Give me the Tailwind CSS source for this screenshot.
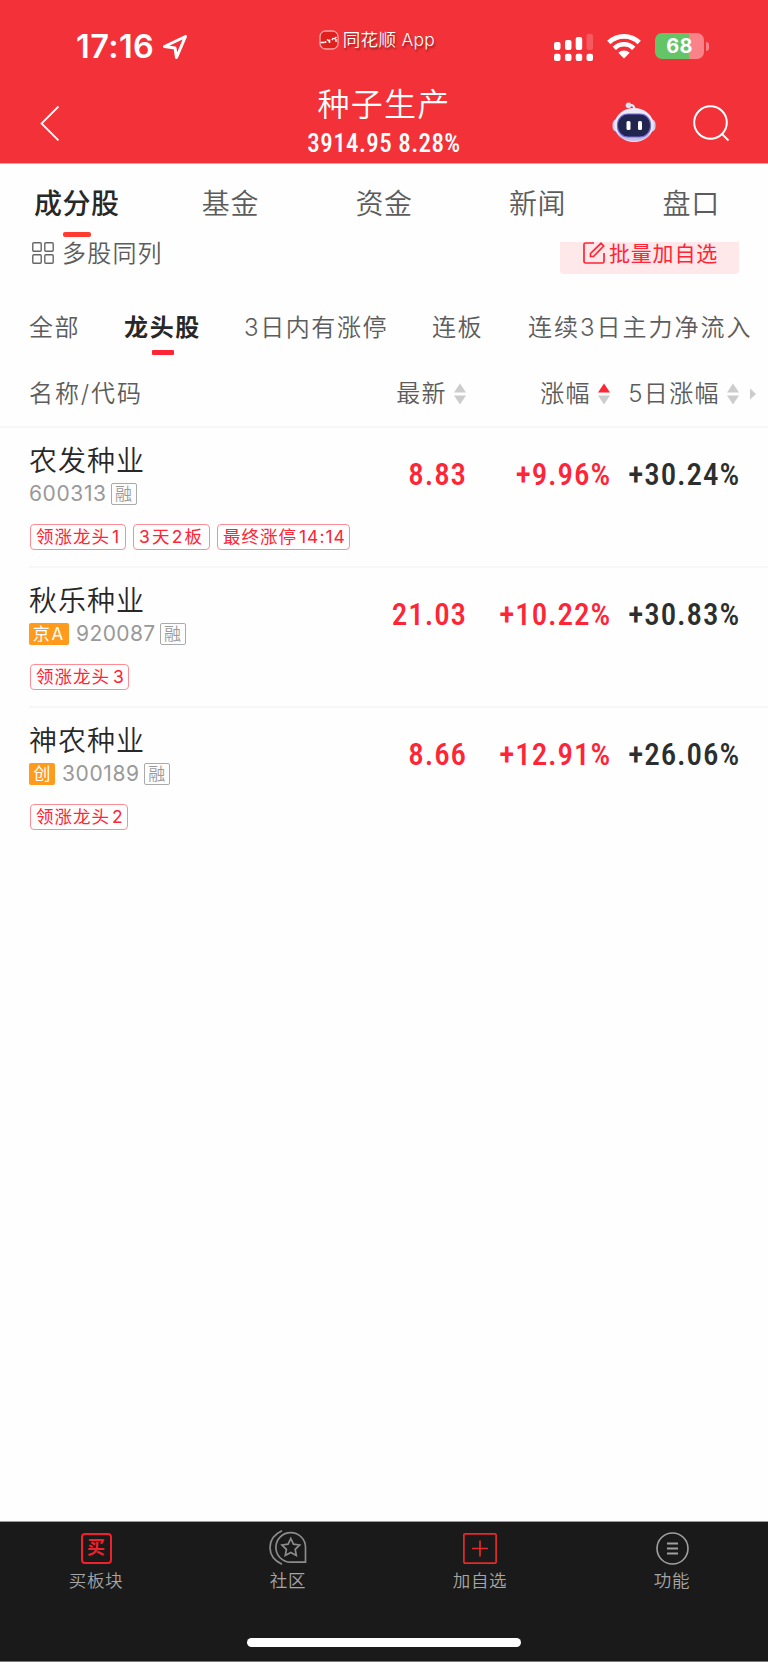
<!DOCTYPE html>
<html lang="zh-CN">
<head>
    <meta charset="UTF-8">
    <meta name="viewport" content="width=device-width, initial-scale=1.0">
    <title>种子生产</title>
    <script src="https://cdn.jsdelivr.net/npm/@tailwindcss/browser@4"></script>
</head>
<body class="bg-[#fefefe] font-['Inter','Noto_Sans_CJK_SC',sans-serif] text-[#323232]">
<div class="w-[768px] h-[1662px] flex flex-col overflow-hidden">

    <!-- Header -->
    <header class="h-[163px] shrink-0 bg-[#f23138] text-white box-content border-b border-[#f8a0a3]">
        <!-- Status bar -->
        <div class="grid grid-cols-3 h-[92px]">
            <div class="flex items-center pl-[76px] gap-2">
                <span class="text-[32.5px] font-semibold leading-[94px] tracking-[0.4px]">17:16</span>
                <svg width="26" height="26" viewBox="0 0 26 26" fill="none" stroke="white" stroke-width="3" stroke-linejoin="round"><path d="M23.500 2.500 L2.500 12.500 L13 14 L14.500 23.500 Z"/></svg>
            </div>
            <div class="flex items-center justify-center gap-1 pr-[14px] pb-[14px]">
                <svg width="20" height="20" viewBox="0 0 20 20" fill="none"><rect x="1" y="1" width="18" height="18" rx="5.500" fill="#e0201f" stroke="#f8a5a6" stroke-width="1.300"/><path d="M1.500 12.500h4M6.500 13v-2M8 9.500l2 1.500M10.500 13v-3.500M13 10l1.500-2M15 9l2.500-2M17 9v3" stroke="white" stroke-width="1.500"/></svg>
                <span class="text-[17.5px] leading-5 tracking-[0.3px] font-[350] text-shadow-[1px_2px_2px_rgb(0_0_0_/_0.4)]">同花顺 App</span>
            </div>
            <div class="flex items-center pl-[42px] gap-[14px]">
                <svg width="39" height="27" viewBox="0 0 39 27" fill="white"><rect x="0" y="8" width="6.500" height="8" rx="2"/><rect x="11" y="6" width="6.500" height="10" rx="2"/><rect x="21.700" y="3" width="6.500" height="13" rx="2"/><rect x="32.500" y="0" width="6.500" height="16" rx="2" opacity=".2"/><rect x="0" y="19.700" width="6.500" height="7.200" rx="2"/><rect x="11" y="19.700" width="6.500" height="7.200" rx="2"/><rect x="21.700" y="19.700" width="6.500" height="7.200" rx="2"/><rect x="32.500" y="19.700" width="6.500" height="7.200" rx="2"/></svg>
                <svg class="-mt-[2px]" width="34" height="26" viewBox="0 0 34 26" fill="none" stroke="white" stroke-width="4.700"><path d="M1.800 9.500 A21.800 21.800 0 0 1 32.200 9.500"/><path d="M7.300 15.300 A13.700 13.700 0 0 1 26.700 15.300"/><path d="M17 25.500 L11.300 19.800 A8 8 0 0 1 22.700 19.800 Z" fill="white" stroke="none"/></svg>
                <div class="flex items-center gap-[2px] -mt-[2px]">
                    <div class="w-[49px] h-[26px] rounded-[7px] bg-linear-to-r from-[#65c466] from-70% to-[#f98388] to-70% text-center text-[20px] leading-[26px] font-bold tracking-[0.3px]">68</div>
                    <div class="w-[3px] h-[9px] rounded-r-full bg-[#f98388]"></div>
                </div>
            </div>
        </div>
        <!-- Title bar -->
        <div class="grid grid-cols-3 h-[71px]">
            <div class="pl-[39px] pt-[13px]">
                <svg width="21" height="36" viewBox="0 0 21 36" fill="none" stroke="white" stroke-width="1.800"><path d="M19.500 1.500 L2.500 18.500 L19.500 35.500"/></svg>
            </div>
            <div class="text-center">
                <h1 class="text-[32px] leading-[34px] font-[350] tracking-[1.2px] -mt-[4px]">种子生产</h1>
                <div class="font-['Roboto'] font-stretch-[85%] font-medium text-[25px] leading-[40px] tracking-[0.4px] pt-0.5">3914.95 8.28%</div>
            </div>
            <div class="flex pl-[100px] pt-[10px]">
                <svg width="44" height="41" viewBox="0 0 44 41" fill="none">
                    <path d="M17 3.500 C21 2.500 22.500 4 22.500 8" stroke="#e6e3f5" stroke-width="2.200"/>
                    <circle cx="16.500" cy="3.300" r="2.800" fill="#dfe0f4"/>
                    <rect x="0.500" y="17" width="43" height="13" rx="5" fill="#cfcdf0"/>
                    <ellipse cx="22" cy="23" rx="19.500" ry="17" fill="#ece9f8"/>
                    <path d="M4 30 C10 42 34 42 40 30 C34 37 10 37 4 30Z" fill="#c5bfea"/>
                    <rect x="5.500" y="12" width="33" height="23" rx="10.500" fill="#20264d" stroke="#7468d8" stroke-width="1.200"/>
                    <rect x="14.500" y="19" width="4" height="9" rx="1.500" fill="white"/>
                    <rect x="26" y="19" width="4" height="9" rx="1.500" fill="white"/>
                </svg>
                <svg class="ml-[37px] mt-[3px]" width="37" height="37" viewBox="0 0 37 37" fill="none" stroke="white" stroke-width="2"><circle cx="17.500" cy="17.500" r="16.300"/><path d="M28.500 28.500 L35.500 35.500"/></svg>
            </div>
        </div>
    </header>

    <!-- Main tabs -->
    <nav class="grid grid-cols-5 h-[78px] shrink-0 text-center text-[28px] leading-[80px] tracking-[0.6px] font-[350] text-[#5c5c5c]">
        <div class="flex flex-col items-center text-[#282828]">
            <span class="font-medium h-[68px]">成分股</span>
            <span class="w-7 h-[5px] rounded-[2px] bg-[#ff3a30]"></span>
        </div>
        <div>基金</div>
        <div>资金</div>
        <div>新闻</div>
        <div>盘口</div>
    </nav>

    <!-- Toolbar -->
    <div class="flex justify-between h-[33px] shrink-0 pl-8 pr-[29px]">
        <div class="flex items-start gap-[8px] text-[24px] leading-6 tracking-[1.2px] font-[350] text-[#5c5c5c]">
            <svg width="22" height="22" viewBox="0 0 22 22" fill="none" stroke="#666" stroke-width="1.400"><rect x=".8" y=".8" width="8.400" height="8.400" rx="1"/><rect x="12.800" y=".8" width="8.400" height="8.400" rx="1"/><rect x=".8" y="12.800" width="8.400" height="8.400" rx="1"/><rect x="12.800" y="12.800" width="8.400" height="8.400" rx="1"/></svg>
            多股同列
        </div>
        <button class="flex items-start w-[179px] h-8 pl-[23px] gap-1 rounded-b bg-[#ffe8e9] text-[#ff2436] text-[21px] leading-[23px] tracking-[0.8px]">
            <svg width="22" height="22" viewBox="0 0 22 22" fill="none" stroke="#ff2436" stroke-width="1.700"><path d="M11 1H2.500Q1 1 1 2.500V19.500Q1 21 2.500 21H19.500Q21 21 21 19.500V11"/><path d="M7.500 14.500V11.500L18 1.300L20.700 4L10.500 14.500Z"/></svg>
            批量加自选
        </button>
    </div>

    <!-- Filters -->
    <nav class="flex h-[92px] shrink-0 pl-[29px] pt-[33px] text-[24px] leading-[40px] tracking-[1.6px] font-[350] text-[#5c5c5c] whitespace-nowrap">
        <span class="w-[95px]">全部</span>
        <div class="w-[120px]">
            <div class="w-[77px] flex flex-col items-center">
                <span class="font-bold h-[42px] text-[#282828]">龙头股</span>
                <span class="w-[22px] h-[5px] rounded-[1px] bg-[#ff2436]"></span>
            </div>
        </div>
        <span class="w-[188px]">3日内有涨停</span>
        <span class="w-[96px]">连板</span>
        <span class="tracking-[2px]">连续3日主力净流入</span>
    </nav>

    <!-- Table head -->
    <div class="flex items-start h-[61px] shrink-0 pl-[29px] pr-3 border-b-2 border-[#f7f7f7] text-[24px] leading-[54px] tracking-[1.4px] font-[350] text-[#5c5c5c]">
        <div class="flex-1 h-[54px] tracking-[1.9px]">名称/代码</div>
        <div class="flex items-center justify-end gap-[7px] h-[54px]">
            最新
            <svg width="12" height="22" viewBox="0 0 12 22" fill="#ccc"><path d="M6 0.500L12 9.500H0Z"/><path d="M0 12.500H12L6 21.500Z"/></svg>
        </div>
        <div class="flex items-center justify-end gap-[7px] w-[144px] h-[54px]">
            涨幅
            <svg width="12" height="22" viewBox="0 0 12 22" fill="#ccc"><path d="M6 0.500L12 9.500H0Z" fill="#ff2436"/><path d="M0 12.500H12L6 21.500Z"/></svg>
        </div>
        <div class="flex items-center justify-end gap-[7px] w-[129px] h-[54px] whitespace-nowrap">
            5日涨幅
            <svg width="12" height="22" viewBox="0 0 12 22" fill="#ccc"><path d="M6 0.500L12 9.500H0Z"/><path d="M0 12.500H12L6 21.500Z"/></svg>
        </div>
        <svg class="ml-[11px] mt-[21px]" width="6" height="12" viewBox="0 0 6 12" fill="#ccc"><path d="M0 0.500L6 6L0 11.500Z"/></svg>
    </div>

    <!-- Stock list -->
    <ul class="flex-1 pl-[29px]">
        <li class="flex h-[140px] pr-7 border-b-2 border-[#f7f7f7]">
            <div class="flex-1 pt-[15px]">
                <h2 class="text-[28px] leading-9 tracking-[1px] font-[350] text-[#282828]">农发种业</h2>
                <div class="flex items-center h-[22px] mt-[4px] gap-[4px] text-[21px] leading-[22px] text-[#999]">
                    <span class="tracking-[0.6px]">600313</span>
                    <span class="w-[26px] h-[22px] border-[1.500px] border-[#aaa] rounded-[2px] text-center text-[17px] leading-[20px] font-[350]">融</span>
                </div>
                <div class="flex gap-[7px] pl-px mt-[19px] text-[17.500px] leading-[24px] tracking-[1px] text-[#ff2436]">
                    <span class="w-24 h-[26px] pl-[5px] border border-[#ff8c95] rounded">领涨龙头<span class="ml-0.5">1</span></span>
                    <span class="w-[77px] h-[26px] pl-[5px] border border-[#ff8c95] rounded tracking-[2.2px]">3天2板</span>
                    <span class="w-[133px] h-[26px] pl-[5px] border border-[#ff8c95] rounded">最终涨停<span class="ml-0.5">14:14</span></span>
                </div>
            </div>
            <div class="flex pt-[27px] text-right font-['Roboto'] font-stretch-[85%] font-medium text-[31px] leading-10 tracking-[0.9px] text-[#ff2436]">
                <span>8.83</span>
                <span class="w-[144px]">+9.96%</span>
                <span class="w-[129px] text-[#2c2f2f]">+30.24%</span>
            </div>
        </li>
        <li class="flex h-[140px] pr-7 border-b-2 border-[#f7f7f7]">
            <div class="flex-1 pt-[15px]">
                <h2 class="text-[28px] leading-9 tracking-[1px] font-[350] text-[#282828]">秋乐种业</h2>
                <div class="flex items-center h-[22px] mt-[4px] gap-[4px] text-[21px] leading-[22px] text-[#999]">
                    <span class="w-10 h-[22px] mr-[3px] bg-[#ff9a1c] rounded-[2px] text-center text-white text-[17px] tracking-[2px]">京A</span>
                    <span class="tracking-[0.4px]">920087</span>
                    <span class="w-[26px] h-[22px] border-[1.500px] border-[#aaa] rounded-[2px] text-center text-[17px] leading-[20px] font-[350]">融</span>
                </div>
                <div class="flex gap-[7px] pl-px mt-[19px] text-[17.500px] leading-[24px] tracking-[1px] text-[#ff2436]">
                    <span class="w-[99px] h-[26px] pl-[5px] border border-[#ff8c95] rounded">领涨龙头<span class="ml-[3px]">3</span></span>
                </div>
            </div>
            <div class="flex pt-[27px] text-right font-['Roboto'] font-stretch-[85%] font-medium text-[31px] leading-10 tracking-[0.9px] text-[#ff2436]">
                <span>21.03</span>
                <span class="w-[144px]">+10.22%</span>
                <span class="w-[129px] text-[#2c2f2f]">+30.83%</span>
            </div>
        </li>
        <li class="flex h-[140px] pr-7">
            <div class="flex-1 pt-[15px]">
                <h2 class="text-[28px] leading-9 tracking-[1px] font-[350] text-[#282828]">神农种业</h2>
                <div class="flex items-center h-[22px] mt-[4px] gap-[4px] text-[21px] leading-[22px] text-[#999]">
                    <span class="w-[26px] h-[22px] mr-[3px] bg-[#ff9a1c] rounded-[2px] text-center text-white text-[17px]">创</span>
                    <span class="tracking-[0.6px]">300189</span>
                    <span class="w-[26px] h-[22px] border-[1.500px] border-[#aaa] rounded-[2px] text-center text-[17px] leading-[20px] font-[350]">融</span>
                </div>
                <div class="flex gap-[7px] pl-px mt-[19px] text-[17.500px] leading-[24px] tracking-[1px] text-[#ff2436]">
                    <span class="w-[98px] h-[26px] pl-[5px] border border-[#ff8c95] rounded">领涨龙头<span class="ml-0.5">2</span></span>
                </div>
            </div>
            <div class="flex pt-[27px] text-right font-['Roboto'] font-stretch-[85%] font-medium text-[31px] leading-10 tracking-[0.9px] text-[#ff2436]">
                <span>8.66</span>
                <span class="w-[144px]">+12.91%</span>
                <span class="w-[129px] text-[#2c2f2f]">+26.06%</span>
            </div>
        </li>
    </ul>

    <!-- Bottom bar -->
    <footer class="flex flex-col items-center justify-between h-[141px] shrink-0 bg-[#1a1a1a] border-t border-b border-t-[#999] border-b-[#777] pb-[14px]">
        <div class="grid grid-cols-4 w-full text-[17.500px] leading-6 tracking-[0.7px] font-[350] text-[#a5a5a5]">
            <div class="flex flex-col items-center pt-[8px]">
                <div class="w-[31px] h-[31px] mt-[3px] mb-[5px] border-2 border-[#f0202c] rounded text-center text-[18px] leading-[26px] tracking-normal font-bold text-[#f0202c]">买</div>
                买板块
            </div>
            <div class="flex flex-col items-center pt-[8px]">
                <svg class="mb-[4px]" width="38" height="35" viewBox="0 0 38 35" fill="none" stroke="#8c8c8c" stroke-width="1.700"><path d="M13 .8 C-3 8 -3 27 13 34.200"/><path d="M36.500 32.200H21.500A14.800 14.800 0 1 1 36.500 17.500Z"/><path d="M21.800 8.500L24.500 14.200L30.600 15L26.200 19.300L27.300 25.400L21.800 22.500L16.300 25.400L17.400 19.300L13 15L19.100 14.200Z"/></svg>
                社区
            </div>
            <div class="flex flex-col items-center pt-[8px]">
                <svg class="mt-[3px] mb-[5px]" width="34" height="31" viewBox="0 0 34 31" fill="none" stroke="#e62a2a" stroke-width="1.700"><rect x=".9" y=".9" width="32.200" height="29.200" rx="1"/><path d="M9 15.500H25M17 7.500V23.500"/></svg>
                加自选
            </div>
            <div class="flex flex-col items-center pt-[8px]">
                <svg class="mt-[2px] mb-[4px]" width="33" height="33" viewBox="0 0 33 33" fill="none" stroke="#a0a0a0"><circle cx="16.500" cy="16.500" r="15.500" stroke-width="1.600"/><path d="M11 11.500H22M11 16.500H22M11 21.500H22" stroke-width="1.800"/></svg>
                功能
            </div>
        </div>
        <div class="w-[274px] h-[9px] rounded-full bg-white"></div>
    </footer>
</div>
</body>
</html>
